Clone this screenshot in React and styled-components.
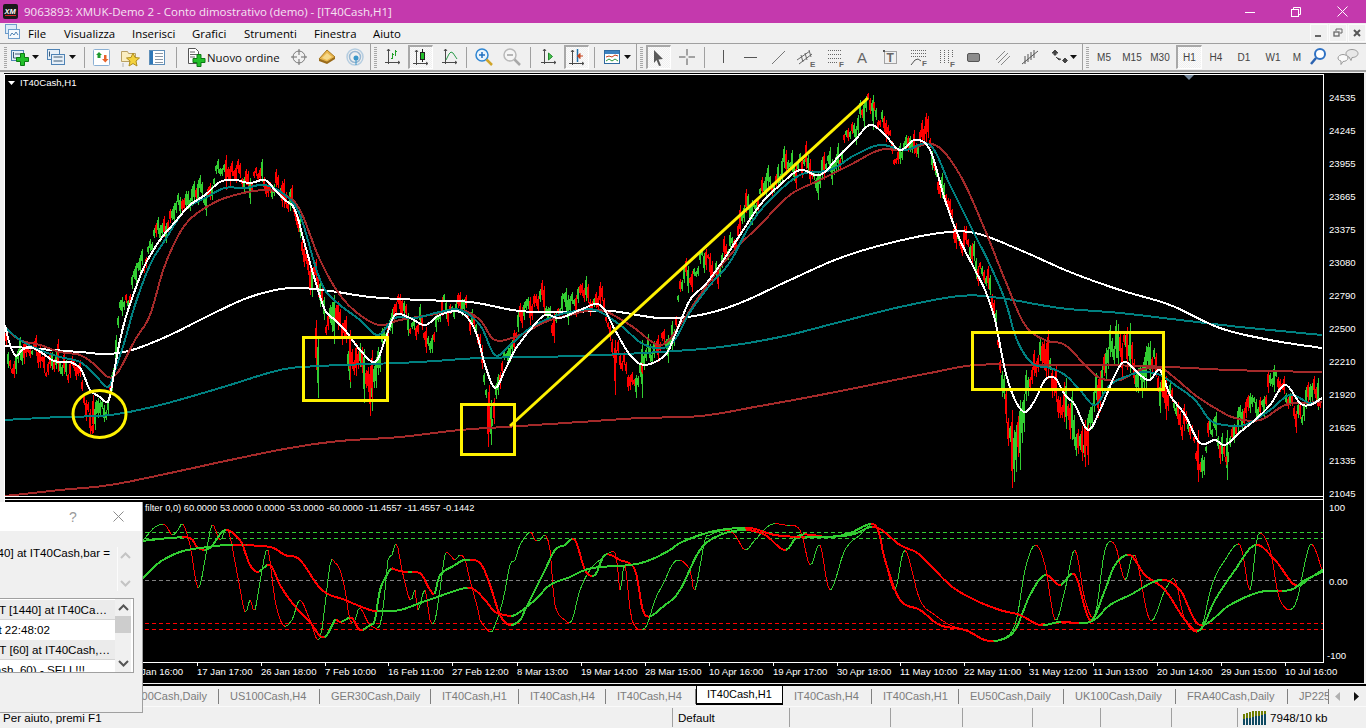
import styled, { createGlobalStyle } from 'styled-components'

const GlobalStyle = createGlobalStyle`
    html, body {
        margin: 0;
        padding: 0;
        background: #f0f0f0;
    }
`

const Page = styled.div`
    position: relative;
    display: flex;
    flex-direction: column;
    width: 1366px;
    height: 728px;
    overflow: hidden;
    background: #f0f0f0;
    font-family: 'Open Sans', 'Liberation Sans', sans-serif;
    font-size: 12px;
    color: #000;
`

const TitleBar = styled.div`
    display: flex;
    align-items: center;
    height: 23px;
    padding-left: 3px;
    padding-right: 1px;
    background: #c439ad;
    color: #f6e4f3;
`

const TitleText = styled.div`
    margin-left: 6px;
    font-size: 11.5px;
    white-space: nowrap;
`

const WindowButton = styled.div`
    display: flex;
    align-items: center;
    justify-content: center;
    width: 46px;
    height: 20px;
    margin-left: ${({ $first }) => ($first ? 'auto' : '0')};
`

const MenuBar = styled.div`
    display: flex;
    align-items: center;
    height: 20px;
    padding-left: 5px;
    border-bottom: 1px solid #a0a0a0;
`

const MenuItem = styled.div`
    width: ${({ $w }) => $w}px;
    font-size: 11.4px;
    white-space: nowrap;
`

const MdiButton = styled.div`
    display: flex;
    align-items: center;
    justify-content: center;
    box-sizing: border-box;
    width: 18px;
    height: 18px;
    margin-left: ${({ $first }) => ($first ? 'auto' : '1px')};
    border: 1px solid #fbfbfb;
`

const Toolbar = styled.div`
    display: flex;
    align-items: center;
    height: 26px;
    padding-left: 4px;
    border-bottom: 2px solid #a0a0a0;
`

const Grip = styled.div`
    flex: none;
    width: 3px;
    height: 21px;
    margin-left: ${({ $ml }) => $ml || 0}px;
    background: repeating-linear-gradient(to bottom, #a8a8a8 0 1px, #f0f0f0 1px 2px);
`

const Separator = styled.div`
    flex: none;
    width: 1px;
    height: ${({ $wide }) => ($wide ? 26 : 21)}px;
    margin-left: ${({ $ml }) => $ml || 0}px;
    background: #a0a0a0;
`

const ToolButton = styled.div`
    flex: none;
    display: flex;
    align-items: center;
    justify-content: center;
    box-sizing: border-box;
    width: ${({ $w }) => $w}px;
    height: 24px;
    margin-left: ${({ $ml }) => $ml || 0}px;
    font-family: 'Liberation Sans', sans-serif;
    font-size: 10px;
    color: #444;
    ${({ $active }) =>
        $active
            ? `
        border: 1px solid #fff;
        border-top: 2px solid #a8a8a8;
        border-left: 2px solid #a8a8a8;
        background: repeating-conic-gradient(#f0f0f0 0 25%, #fbfbfb 0 50%) 0 0 / 2px 2px;
    `
            : ''}
`

const OrderButton = styled.div`
    flex: none;
    display: flex;
    align-items: center;
    gap: 1px;
    width: 94px;
    margin-left: 9px;
    font-size: 11.4px;
    white-space: nowrap;
    color: #111;
`

const ChartArea = styled.div`
    display: flex;
    box-sizing: border-box;
    height: 612px;
    padding-left: 4px;
    padding-top: 1px;
`

const ChartSvg = styled.svg`
    display: block;
    flex: none;
    background: #000;

    text {
        font-family: 'Liberation Sans', sans-serif;
        font-size: 9.6px;
        fill: #fff;
    }
`

const IndicatorLabel = styled.text`
    && {
        font-size: 9.3px;
    }
`

const TabStrip = styled.div`
    display: flex;
    align-items: center;
    height: 20px;
    border-top: 2px solid #000;
    font-family: 'Liberation Sans', sans-serif;
    font-size: 11px;
    overflow: hidden;
`

const Tab = styled.div`
    flex: none;
    display: flex;
    align-items: center;
    justify-content: ${({ $end }) => ($end ? 'flex-end' : 'flex-start')};
    box-sizing: border-box;
    width: ${({ $w }) => $w}px;
    height: 15px;
    padding-left: ${({ $end }) => ($end ? 0 : 11)}px;
    padding-right: ${({ $end }) => ($end ? 11 : 0)}px;
    border-right: 1px solid #808080;
    overflow: hidden;
    white-space: nowrap;
    color: #7c7c7c;
`

const ActiveTab = styled.div`
    flex: none;
    display: flex;
    align-items: center;
    box-sizing: border-box;
    width: 87px;
    height: 20px;
    margin-top: -2px;
    padding-left: 10px;
    background: #fff;
    border: 1px solid #000;
    border-top: 0;
    border-bottom-width: 2px;
    color: #000;
`

const TabArrows = styled.div`
    flex: none;
    display: flex;
    align-items: center;
    gap: 14px;
    padding-left: 6px;
`

const StatusBar = styled.div`
    display: flex;
    align-items: center;
    height: 22px;
    border-top: 1px solid #fafafa;
    box-sizing: border-box;
    font-family: 'Liberation Sans', sans-serif;
    font-size: 11.6px;
`

const StatusCell = styled.div`
    flex: none;
    display: flex;
    align-items: center;
    gap: 4px;
    box-sizing: border-box;
    width: ${({ $w }) => $w}px;
    height: 19px;
    padding-left: ${({ $pl }) => $pl}px;
    border-right: ${({ $last }) => ($last ? '0' : '1px solid #a0a0a0')};
    white-space: nowrap;
`

const Dialog = styled.div`
    position: absolute;
    left: 0;
    top: 502px;
    box-sizing: border-box;
    width: 143px;
    height: 211px;
    background: #f0f0f0;
    border-right: 1px solid #a0a0a0;
    border-bottom: 1px solid #a0a0a0;
    font-family: 'Liberation Sans', sans-serif;
    font-size: 11.6px;
`

const DialogHead = styled.div`
    display: flex;
    align-items: center;
    height: 29px;
    padding-left: 69px;
    gap: 36px;
    background: #fff;
    color: #9a9a9a;
    font-size: 14px;
`

const MessageRow = styled.div`
    display: flex;
    height: 67px;
    overflow: hidden;
`

const MessageText = styled.div`
    flex: none;
    display: flex;
    justify-content: flex-end;
    width: 110px;
    padding-top: 15px;
    white-space: nowrap;
`

const MessageScroll = styled.div`
    flex: none;
    display: flex;
    flex-direction: column;
    align-items: center;
    justify-content: space-between;
    box-sizing: border-box;
    width: 15px;
    height: 44px;
    margin-top: 16px;
    margin-left: 7px;
    padding: 5px 0 4px;
    border-left: 1px solid #fbfbfb;
`

const ListBox = styled.div`
    display: flex;
    box-sizing: border-box;
    width: 134px;
    height: 75px;
    border: 1px solid #a0a0a0;
    border-left: 0;
    background: #fff;
    overflow: hidden;
`

const ListRows = styled.div`
    flex: none;
    width: 115px;
    padding-top: 1px;
`

const ListRow = styled.div`
    display: flex;
    justify-content: flex-end;
    align-items: center;
    box-sizing: border-box;
    height: 20px;
    padding-right: ${({ $pr }) => $pr}px;
    background: ${({ $grey }) => ($grey ? '#ebebeb' : '#fff')};
    border-bottom: 1px solid ${({ $grey }) => ($grey ? '#d4d4d4' : '#fff')};
    white-space: nowrap;
    overflow: hidden;
`

const ListScroll = styled.div`
    flex: none;
    display: flex;
    flex-direction: column;
    align-items: center;
    width: 16px;
    background: #f0f0f0;
`

const ScrollEnd = styled.div`
    display: flex;
    align-items: center;
    justify-content: center;
    height: 17px;
`

const ScrollThumb = styled.div`
    width: 16px;
    height: 17px;
    background: #cdcdcd;
`

const ScrollTrack = styled.div`
    flex: 1;
`

// ---- chart data, key points traced in page pixels ----

const priceKeys = [[5,330],[12,380],[22,345],[35,355],[50,365],[65,365],[80,375],[92,425],[100,405],[105,410],[115,370],[120,310],[130,290],[150,245],[165,225],[185,200],[205,195],[215,180],[228,165],[240,180],[265,180],[280,195],[292,195],[300,240],[315,280],[325,320],[335,310],[345,335],[352,365],[375,380],[385,340],[395,305],[410,320],[430,340],[445,305],[465,308],[475,320],[490,420],[505,360],[520,320],[535,295],[555,320],[575,295],[600,298],[615,350],[625,375],[640,380],[650,345],[670,345],[680,290],[700,260],[720,270],[740,225],[760,195],[780,172],[800,160],[820,178],[840,155],[860,115],[873,102],[885,130],[895,155],[915,145],[925,130],[940,185],[960,240],[980,265],[995,310],[1012,465],[1025,400],[1040,350],[1050,375],[1060,400],[1085,450],[1090,420],[1105,360],[1125,340],[1135,375],[1155,360],[1165,395],[1185,420],[1200,465],[1215,425],[1228,460],[1240,410],[1255,410],[1280,375],[1295,420],[1310,395],[1322,400]]

const spikes = [[318,338,398,1],[316,320,370,0],[372,350,400,0],[350,330,382,0],[93,395,433,0],[95,405,430,1],[488,395,447,0],[491,400,445,1],[489,385,432,0],[615,340,395,0],[642,340,398,1],[1012,410,488,0],[1014,430,482,1],[1020,400,470,1],[1085,420,467,0],[1088,425,465,0],[1127,327,370,0],[1198,430,482,0],[1227,430,480,1],[1318,378,410,1],[226,155,190,0],[873,95,130,1]]

const fastWhite = [[5,325],[10,345],[16,356],[22,350],[30,347],[42,353],[52,360],[60,362],[70,362],[80,368],[85,378],[90,390],[100,397],[108,402],[112,385],[118,350],[125,320],[135,290],[145,265],[160,240],[175,222],[190,205],[205,195],[220,182],[235,180],[250,183],[265,180],[275,190],[285,200],[295,210],[305,245],[315,280],[325,310],[335,320],[345,330],[360,350],[375,362],[385,340],[395,315],[410,318],[425,325],[440,315],[460,312],[475,330],[485,365],[495,388],[505,370],[515,350],[530,330],[545,315],[560,318],[580,310],[600,305],[615,330],[630,355],[645,365],[665,355],[675,335],[690,300],[705,285],[720,265],[740,235],[760,205],[780,185],[800,170],[820,175],[840,155],[855,140],[870,125],[885,135],[900,150],[915,140],[930,150],[945,200],[960,240],[975,270],[985,290],[995,320],[1005,370],[1015,400],[1025,412],[1035,400],[1045,380],[1055,378],[1065,395],[1075,405],[1088,430],[1100,410],[1115,375],[1125,362],[1140,375],[1150,380],[1160,370],[1170,395],[1185,415],[1200,443],[1215,440],[1225,445],[1240,432],[1255,420],[1270,405],[1285,385],[1300,403],[1310,405],[1322,398]]

const fastTeal = [[5,327],[20,340],[40,350],[60,357],[80,362],[95,375],[108,387],[115,370],[125,340],[135,305],[150,265],[165,240],[185,210],[205,198],[225,188],[245,188],[265,185],[285,195],[300,215],[315,265],[325,290],[340,305],[360,320],[378,335],[395,318],[415,318],[440,312],[460,310],[480,325],[495,355],[510,345],[530,328],[550,318],[570,312],[595,310],[620,325],[645,345],[670,345],[690,312],[710,285],[730,262],[750,225],[770,200],[800,175],[830,170],[855,155],[880,145],[905,150],[930,145],[950,185],[975,235],[990,265],[1005,300],[1015,335],[1025,355],[1035,365],[1050,368],[1065,375],[1080,390],[1095,405],[1110,385],[1130,375],[1145,372],[1160,375],[1175,385],[1195,400],[1210,420],[1225,425],[1245,425],[1270,410],[1290,395],[1310,403],[1322,398]]

const fastBrown = [[5,328],[20,340],[40,345],[60,352],[80,355],[95,365],[108,377],[118,372],[135,340],[150,315],[165,265],[185,225],[210,205],[235,195],[265,190],[285,195],[300,210],[320,260],[340,295],[360,315],[380,325],[400,320],[430,315],[460,310],[480,320],[495,340],[520,335],[545,322],[570,315],[600,310],[630,325],[660,345],[680,325],[700,295],[730,255],[760,225],[790,195],[820,180],[850,165],[880,150],[905,150],[935,145],[960,175],[985,230],[1005,280],[1025,325],[1045,340],[1065,345],[1085,365],[1100,378],[1120,380],[1140,370],[1160,368],[1175,378],[1195,395],[1215,408],[1235,418],[1260,420],[1285,405],[1305,403],[1322,402]]

const slowWhite = [[5,346],[40,349],[80,352],[108,354],[135,349],[170,335],[210,315],[250,297],[290,288],[330,291],[370,297],[420,300],[470,302],[520,311],[570,312],[610,311],[660,318],[700,315],[740,303],[790,280],[840,258],[890,243],[940,233],[975,233],[1020,250],[1070,272],[1120,290],[1170,305],[1220,328],[1270,340],[1322,348]]

const slowTeal = [[5,420],[60,417],[110,415],[160,405],[220,388],[280,370],[320,366],[370,364],[420,362],[480,358],[540,357],[600,355],[660,352],[720,347],[780,337],[840,322],[900,307],[960,296],[1000,298],[1060,308],[1120,313],[1180,320],[1240,327],[1322,335]]

const slowBrown = [[5,496],[60,490],[110,485],[170,473],[230,460],[290,448],[340,441],[400,437],[460,430],[520,426],[580,422],[640,418],[700,416],[760,406],[820,395],[880,383],[930,373],[975,365],[1030,365],[1100,365],[1170,367],[1230,370],[1322,372]]

const subThin = [[142,540],[145,538],[155,527],[165,525],[172,535],[178,530],[183,524],[190,545],[198,588],[205,560],[212,525],[220,540],[228,530],[238,578],[245,612],[250,600],[255,610],[262,570],[268,550],[275,600],[283,625],[292,620],[300,600],[310,620],[320,638],[330,565],[335,563],[340,570],[345,590],[350,620],[355,620],[360,608],[370,625],[380,625],[385,590],[388,560],[392,555],[395,545],[398,548],[402,570],[410,600],[415,590],[418,610],[425,590],[430,620],[435,620],[440,590],[445,555],[450,555],[455,560],[460,555],[465,560],[470,580],[478,610],[480,620],[490,632],[495,625],[503,600],[510,565],[515,560],[520,545],[530,532],[535,540],[540,540],[545,535],[550,550],[555,605],[565,620],[572,620],[580,590],[590,570],[600,560],[615,553],[620,590],[625,565],[632,620],[645,628],[655,600],[665,580],[672,565],[680,560],[690,570],[695,590],[705,540],[710,535],[725,530],[735,535],[745,550],[755,540],[770,525],[785,525],[800,530],[810,565],[820,545],[830,590],[845,550],[860,535],[875,525],[885,560],[895,590],[905,550],[920,600],[935,615],[950,625],[965,630],[985,640],[1000,640],[1015,625],[1025,570],[1035,545],[1045,565],[1055,620],[1065,590],[1075,550],[1085,600],[1095,615],[1105,550],[1115,545],[1125,580],[1135,555],[1150,620],[1165,590],[1175,580],[1185,620],[1200,630],[1212,585],[1225,560],[1240,545],[1250,590],[1258,535],[1270,550],[1280,600],[1295,605],[1310,545],[1322,570]]

const subMedium = [[142,541],[170,538],[190,538],[198,548],[210,548],[225,530],[240,540],[245,552],[250,565],[258,572],[270,565],[280,585],[290,600],[300,612],[310,622],[320,636],[327,635],[335,620],[340,622],[345,620],[352,618],[360,630],[370,625],[375,620],[380,590],[390,570],[396,570],[405,572],[415,572],[422,575],[430,590],[435,593],[440,575],[455,565],[465,560],[480,563],[490,585],[500,615],[510,625],[520,620],[525,610],[535,590],[545,570],[555,550],[565,545],[575,540],[585,570],[595,575],[605,555],[620,560],[635,570],[645,615],[665,605],[680,590],[700,550],[720,535],[745,530],[765,535],[785,550],[800,535],[830,537],[850,533],[875,525],[885,560],[900,600],[920,610],[940,625],[965,630],[985,640],[1000,640],[1015,630],[1030,595],[1045,575],[1060,585],[1075,575],[1090,620],[1105,590],[1115,565],[1130,555],[1145,575],[1165,590],[1185,620],[1200,630],[1215,600],[1235,570],[1255,545],[1275,560],[1295,585],[1310,578],[1322,570]]

const subThick = [[143,578],[160,562],[180,552],[200,548],[225,545],[240,545],[270,547],[285,555],[300,560],[322,590],[345,600],[370,610],[380,611],[400,610],[420,603],[440,596],[465,588],[475,590],[485,600],[495,612],[505,615],[515,615],[535,600],[550,585],[570,577],[585,570],[600,567],[630,565],[650,560],[670,550],[680,543],[700,535],[720,530],[750,528],[775,535],[810,537],[850,535],[875,527],[900,545],[920,555],[950,585],[975,600],[1000,610],[1020,615],[1040,625],[1060,622],[1090,622],[1110,605],[1130,595],[1160,580],[1180,590],[1200,625],[1230,605],[1260,592],[1290,590],[1305,580],[1322,572]]

const priceLabels = [[24535,97],[24245,130],[23955,163],[23665,196],[23375,229],[23080,262],[22790,295],[22500,328],[22210,361],[21920,394],[21625,427],[21335,460],[21045,493]]

const timeLabels = [['8 Jan 16:00',133],['17 Jan 17:00',197],['26 Jan 18:00',261],['7 Feb 10:00',325],['16 Feb 11:00',388],['27 Feb 12:00',452],['8 Mar 13:00',517],['19 Mar 14:00',581],['28 Mar 15:00',645],['10 Apr 16:00',709],['19 Apr 17:00',773],['30 Apr 18:00',837],['11 May 10:00',900],['22 May 11:00',964],['31 May 12:00',1029],['11 Jun 13:00',1093],['20 Jun 14:00',1157],['29 Jun 15:00',1221],['10 Jul 16:00',1285]]

function randomFrom(seed) {
    let s = seed
    return () => {
        s = (s + 0x6d2b79f5) | 0
        let t = Math.imul(s ^ (s >>> 15), 1 | s)
        t = (t + Math.imul(t ^ (t >>> 7), 61 | t)) ^ t
        return ((t ^ (t >>> 14)) >>> 0) / 4294967296
    }
}

function priceAt(x) {
    for (let i = 1; i < priceKeys.length; i++) {
        if (x <= priceKeys[i][0]) {
            const [x0, y0] = priceKeys[i - 1]
            const [x1, y1] = priceKeys[i]
            return y0 + ((y1 - y0) * (x - x0)) / (x1 - x0)
        }
    }
    return 400
}

function buildCandles() {
    const rnd = randomFrom(40)
    let up = ''
    let down = ''
    const bar = (x, top, bottom, isUp) => {
        const bodyTop = Math.round(top + (bottom - top) * 0.15)
        const bodyH = Math.max(2, Math.round((bottom - top) * 0.6))
        const d = `M${x} ${top}h1V${bottom}h-1zM${x - 1} ${bodyTop}h1v${bodyH}h-1z`
        if (isUp) up += d
        else down += d
    }
    for (let x = 6; x < 1322; x += 2) {
        const wobble = 7 * Math.sin(x * 0.31) + 5 * Math.sin(x * 0.83 + 1)
        const c = priceAt(x) + wobble
        const rising = priceAt(x + 6) < priceAt(x - 6)
        const wild = (x > 300 && x < 385) || (x > 1000 && x < 1170) ? 2 : 1
        const spread = (5 + rnd() * 11) * wild
        const top = Math.round(c - spread * rnd() - 2)
        const bottom = Math.round(c + spread * rnd() + 2)
        bar(x, top, bottom, rnd() < (rising ? 0.72 : 0.25))
    }
    spikes.forEach(([x, top, bottom, isUp]) => bar(x, top, bottom, isUp === 1))
    return { up, down }
}

const candles = buildCandles()

// catmull-rom through the traced points, sampled every two pixels or so
function smooth(pts) {
    const out = []
    for (let i = 0; i < pts.length - 1; i++) {
        const p0 = pts[Math.max(i - 1, 0)]
        const p1 = pts[i]
        const p2 = pts[i + 1]
        const p3 = pts[Math.min(i + 2, pts.length - 1)]
        const steps = Math.max(1, Math.round((p2[0] - p1[0]) / 2))
        for (let s = 0; s < steps; s++) {
            const t = s / steps
            const t2 = t * t
            const t3 = t2 * t
            const at = (k) =>
                0.5 *
                (2 * p1[k] +
                    (p2[k] - p0[k]) * t +
                    (2 * p0[k] - 5 * p1[k] + 4 * p2[k] - p3[k]) * t2 +
                    (3 * p1[k] - p0[k] - 3 * p2[k] + p3[k]) * t3)
            out.push([+at(0).toFixed(1), +at(1).toFixed(1)])
        }
    }
    out.push(pts[pts.length - 1])
    return out
}

const toPoints = (pts) => smooth(pts).map((p) => p.join(',')).join(' ')

function splitByDirection(pts) {
    let up = ''
    let down = ''
    for (let i = 1; i < pts.length; i++) {
        const d = `M${pts[i - 1][0]} ${pts[i - 1][1]}L${pts[i][0]} ${pts[i][1]}`
        if (pts[i][1] <= pts[i - 1][1]) up += d
        else down += d
    }
    return { up, down }
}

function SubLine({ pts, width }) {
    const { up, down } = splitByDirection(smooth(pts))
    return (
        <g fill="none" strokeWidth={width} strokeLinecap="round">
            <path d={up} stroke="#32cd32" />
            <path d={down} stroke="#ff0000" />
        </g>
    )
}

function Chart() {
    return (
        <ChartSvg width="1360" height="610" viewBox="4 73 1360 610">
            <g shapeRendering="crispEdges">
                <path d={candles.up} fill="#32cd32" />
                <path d={candles.down} fill="#ff0000" />
                <g fill="none" strokeWidth="2" strokeLinejoin="round">
                    <polyline points={toPoints(slowBrown)} stroke="#a52a2a" />
                    <polyline points={toPoints(slowTeal)} stroke="#008080" />
                    <polyline points={toPoints(slowWhite)} stroke="#fff" />
                    <polyline points={toPoints(fastBrown)} stroke="#a52a2a" />
                    <polyline points={toPoints(fastTeal)} stroke="#008080" />
                    <polyline points={toPoints(fastWhite)} stroke="#fff" />
                </g>
            </g>

            <g fill="none" stroke="#fff200" strokeWidth="3">
                <ellipse cx="99.5" cy="414" rx="26.5" ry="23.5" />
                <rect x="303.5" y="337.5" width="84" height="63" />
                <rect x="461.5" y="404.5" width="53" height="50" />
                <rect x="972.5" y="332.5" width="191" height="57" />
                <line x1="510" y1="426" x2="868" y2="98" />
            </g>

            <g shapeRendering="crispEdges" strokeDasharray="4 3" strokeWidth="1">
                <line x1="5" x2="1323" y1="532.5" y2="532.5" stroke="#32cd32" />
                <line x1="5" x2="1323" y1="538.5" y2="538.5" stroke="#32cd32" />
                <line x1="5" x2="1323" y1="580.5" y2="580.5" stroke="#808080" />
                <line x1="5" x2="1323" y1="623.5" y2="623.5" stroke="#ff0000" />
                <line x1="5" x2="1323" y1="629.5" y2="629.5" stroke="#ff0000" />
            </g>
            <g shapeRendering="crispEdges">
                <SubLine pts={subThin} width={1} />
                <SubLine pts={subMedium} width={2} />
                <SubLine pts={subThick} width={2} />
            </g>

            <g fill="#fff" shapeRendering="crispEdges">
                <rect x="4" y="74" width="1320" height="1" />
                <rect x="4" y="74" width="1" height="589" />
                <rect x="1323" y="74" width="1" height="589" />
                <rect x="4" y="496" width="1320" height="1" />
                <rect x="4" y="499" width="1320" height="1" />
                <rect x="4" y="662" width="1320" height="1" />
                {timeLabels.map(([label, x]) => (
                    <rect key={label} x={x} y="662" width="1" height="4" />
                ))}
            </g>

            <polygon points="1184,75 1194,75 1189,80" fill="#74879b" />
            <polygon points="8,81 15,81 11.5,85" fill="#fff" />
            <text x="20" y="86">IT40Cash,H1</text>
            <IndicatorLabel x="145" y="511">filter 0,0) 60.0000 53.0000 0.0000 -53.0000 -60.0000 -11.4557 -11.4557 -0.1442</IndicatorLabel>

            {priceLabels.map(([label, y]) => (
                <text key={label} x="1329" y={y + 3.5}>
                    {label}
                </text>
            ))}
            <text x="1329" y="510.5">100</text>
            <text x="1329" y="584.5">0.00</text>
            <text x="1327" y="658.5">-100</text>

            {timeLabels.map(([label, x]) => (
                <text key={label} x={x} y="675">
                    {label}
                </text>
            ))}
        </ChartSvg>
    )
}

// ---- icons ----

const Icon = ({ children, w = 20, h = 20 }) => (
    <svg width={w} height={h} viewBox={`0 ${-(h - 20) / 2} ${w} ${h}`} fill="none">
        {children}
    </svg>
)

const GreenPlus = ({ x = 0, y = 0 }) => (
    <path
        transform={`translate(${x} ${y})`}
        d="M4.5.5h4v4h4v4h-4v4h-4v-4h-4v-4h4z"
        fill="#22c02a"
        stroke="#0c7a14"
    />
)

const Axes = () => (
    <path d="M5.5 2v15M2 15.5h15M4 4l1.500-2 1.500 2M15 14l2 1.500-2 1.500" stroke="#4a4a4a" />
)

const NewChartIcon = () => (
    <Icon>
        <rect x="1.500" y="3.500" width="12" height="10" fill="#e6eff8" stroke="#4f83b5" />
        <path d="M3.500 5v6h7M5 7h6" stroke="#3d5a75" />
        <GreenPlus x={6} y={6} />
    </Icon>
)

const ProfilesIcon = () => (
    <Icon>
        <rect x="1.500" y="2.500" width="12" height="10" fill="#e6eff8" stroke="#4f83b5" />
        <rect x="5.500" y="7.500" width="13" height="10" fill="#e6eff8" stroke="#4f83b5" />
        <path d="M3.500 4.500v5M7.500 10h9M7.500 14h9" stroke="#3d5a75" />
    </Icon>
)

const MarketWatchIcon = () => (
    <Icon>
        <rect x="1.500" y="2.500" width="16" height="16" rx="1" fill="#fff" stroke="#8ab0d4" />
        <path d="M7 5l3 3H8.500v3h-3V8H4z" fill="#1f9a2e" />
        <path d="M12 8h2.500v4H16.500l-3.200 3.500L10 12h2z" fill="#e8632b" />
    </Icon>
)

const FavoritesIcon = () => (
    <Icon>
        <path d="M1.500 4.500h6l1 2h7v8h-14z" fill="#fbeec0" stroke="#b9a064" />
        <path d="M3 16.500v3" stroke="#777" strokeDasharray="1 1" />
        <path d="M13 6l2 4.500 4.500.5-3.500 3 1 5-4-2.500L9 19l1-5-3.500-3 4.500-.5z" fill="#f3d23e" stroke="#b08e1e" />
    </Icon>
)

const TerminalIcon = () => (
    <Icon>
        <rect x="1.500" y="3.500" width="15" height="14" fill="#fff" stroke="#5f8fb9" />
        <rect x="2" y="4" width="3" height="13" fill="#2f78b8" />
        <path d="M7 6.500h8M7 9.500h8M7 12.500h8M7 15.500h8" stroke="#8a97a5" />
    </Icon>
)

const OrderIcon = () => (
    <Icon>
        <path d="M2.500 1.500h7l3 3v12h-10z" fill="#fff" stroke="#555" />
        <path d="M4 5h5M4 7.500h7M4 10h5" stroke="#666" />
        <GreenPlus x={6.500} y={7} />
    </Icon>
)

const CrosshairCircleIcon = () => (
    <Icon>
        <circle cx="10" cy="10" r="6" stroke="#7a7a7a" />
        <path d="M10 2v6M10 12v6M2 10h6M12 10h6" stroke="#6a6a6a" />
    </Icon>
)

const GoldIcon = () => (
    <Icon>
        <path d="M2 12l8-9 8 7-8 5z" fill="#eab74e" stroke="#a87a22" />
        <path d="M2 12l8 3 8-5v2l-8 5-8-3z" fill="#9a6a18" />
        <path d="M5 11l5-5 5 4-5 3z" fill="#f6d98a" />
    </Icon>
)

const SignalIcon = () => (
    <Icon>
        <circle cx="10" cy="10" r="8" stroke="#b5cde0" strokeWidth="1.500" />
        <circle cx="10" cy="10" r="5.500" stroke="#9ab8d2" strokeWidth="1.500" />
        <circle cx="11" cy="11" r="2.500" fill="#3a96c9" />
        <path d="M11 13v5" stroke="#3a96c9" />
    </Icon>
)

const BarsIcon = () => (
    <Icon>
        <Axes />
        <path d="M9.500 6v6M8 11.500h1.500M9.500 7.500H11M12.500 3v6M12.500 4.500H14" stroke="#22a02a" />
    </Icon>
)

const CandleIcon = () => (
    <Icon>
        <Axes />
        <path d="M11.500 1v13" stroke="#222" />
        <rect x="9.500" y="4.500" width="4" height="7" fill="#22c02a" stroke="#222" />
    </Icon>
)

const LineIcon = () => (
    <Icon>
        <Axes />
        <path d="M6 13l3-6 2-2 2 1 4 6" stroke="#2a9a4a" />
    </Icon>
)

const ZoomIcon = ({ minus }) => (
    <Icon>
        <circle cx="8" cy="8" r="6" fill={minus ? '#f5f5f5' : '#eaf4fc'} stroke={minus ? '#b9b9b9' : '#2f86d2'} strokeWidth="1.500" />
        <path d={minus ? 'M5 8h6' : 'M5 8h6M8 5v6'} stroke={minus ? '#a0a0a0' : '#1f6fc0'} strokeWidth="1.500" />
        <path d="M12.500 12.500l5.500 5.500" stroke={minus ? '#a8a8a8' : '#d0a52a'} strokeWidth="2.500" />
    </Icon>
)

const ShiftIcon = () => (
    <Icon>
        <Axes />
        <path d="M9.500 6l4 3.500-4 3.500z" fill="#49c24f" stroke="#1f8a2a" />
    </Icon>
)

const AutoScrollIcon = () => (
    <Icon>
        <Axes />
        <path d="M10.500 1v13" stroke="#1f6fa8" strokeWidth="1.500" />
        <path d="M16 8h-3M13 5.500L10.500 8l2.500 2.500z" stroke="#c5401a" fill="#c5401a" />
    </Icon>
)

const TemplateIcon = () => (
    <Icon w={18}>
        <rect x="1.500" y="3.500" width="15" height="13" fill="#fff" stroke="#2f6aa0" />
        <rect x="2" y="4" width="14" height="3" fill="#3d82c0" />
        <path d="M3 10l3-1 3 1 3-2 3 1" stroke="#c8401a" />
        <path d="M3 14l3-2 3 2 3-2 3 2" stroke="#2a9a3a" />
    </Icon>
)

const CaretDown = () => (
    <svg width="7" height="4" viewBox="0 0 7 4">
        <path d="M0 0h7L3.500 4z" fill="#111" />
    </svg>
)

const CursorIcon = () => (
    <Icon>
        <path d="M5 2l9 9-4.500.5 2.500 6-2 .5-2.500-6L5 15z" fill="#5a5a5a" />
    </Icon>
)

const CrossIcon = () => (
    <Icon>
        <path d="M10 2v6.500M10 11.500V18M2 10h6.500M11.500 10H18" stroke="#555" />
    </Icon>
)

const VLineIcon = () => (
    <Icon>
        <path d="M10.500 3v13" stroke="#555" />
    </Icon>
)

const HLineIcon = () => (
    <Icon>
        <path d="M3 10.500h13" stroke="#555" />
    </Icon>
)

const TrendIcon = () => (
    <Icon>
        <path d="M3 17L16 4" stroke="#777" />
    </Icon>
)

const LetterMark = styled.text`
    font-family: 'Liberation Sans', sans-serif;
    font-weight: ${({ $thin }) => ($thin ? 400 : 700)};
    font-size: ${({ $size }) => $size}px;
    fill: #666;
`

const EquidistantIcon = () => (
    <Icon h={24}>
        <path d="M1 13L14 4M3 17L16 7M5 8l2 7M9 6l2 7M13 3l2 7" stroke="#666" />
        <LetterMark x="14" y="20" $size={8}>E</LetterMark>
    </Icon>
)

const FiboIcon = () => (
    <Icon h={24}>
        <path d="M3 3.500h13M3 7.500h13M3 11.500h13M3 15.500h10" stroke="#666" strokeDasharray="1 1" />
        <LetterMark x="14" y="20" $size={8}>F</LetterMark>
    </Icon>
)

const TextIcon = () => (
    <Icon h={24}>
        <LetterMark x="4" y="16" $size={15} $thin>A</LetterMark>
    </Icon>
)

const LabelIcon = () => (
    <Icon h={24}>
        <rect x="3.500" y="4.500" width="12" height="12" stroke="#555" strokeDasharray="1 1" />
        <rect x="2" y="3" width="2" height="2" fill="#555" />
        <LetterMark x="5.500" y="15" $size={12}>T</LetterMark>
    </Icon>
)

const FiboArcIcon = () => (
    <Icon h={24}>
        <path d="M2 3.500h15M2 6.500h15M2 9.500h15" stroke="#666" strokeDasharray="1 1" />
        <path d="M2 18l4-5 3-1 3 2" stroke="#555" />
        <LetterMark x="13" y="19" $size={8}>F</LetterMark>
    </Icon>
)

const FiboTimeIcon = () => (
    <Icon h={24}>
        <path d="M3.500 3v14M7.500 3v14M11.500 3v14M15.500 3v8" stroke="#666" strokeDasharray="1 1" />
        <LetterMark x="13" y="20" $size={8}>F</LetterMark>
    </Icon>
)

const RectIcon = () => (
    <Icon>
        <rect x="3.500" y="6.500" width="12" height="8" rx="1.500" fill="#8c8c8c" stroke="#555" />
    </Icon>
)

const ParallelIcon = () => (
    <Icon>
        <path d="M3 13L12 4M5 16L15 6M8 18l9-9" stroke="#888" />
    </Icon>
)

const PitchIcon = () => (
    <Icon>
        <path d="M2 17L18 4M5 9v8M8 7v8M11 5v8M14 3v8" stroke="#555" />
    </Icon>
)

const ArrowsIcon = () => (
    <Icon>
        <path d="M6 3l3 3H7v2H5V6H3zM16 11l2.500 2.500L16 16l-2.500-2.500zM7 10l3 3 2-1" stroke="#444" fill="#444" />
    </Icon>
)

const SearchIcon = () => (
    <Icon>
        <circle cx="12" cy="7" r="5" fill="#fff" stroke="#2f72c4" strokeWidth="2" />
        <path d="M8 11l-5 6" stroke="#2a62b0" strokeWidth="2.500" />
    </Icon>
)

const ChatIcon = () => (
    <Icon w={22}>
        <path d="M9 6.500c0-2.500 3-4 6-4s6 1.500 6 4-3 4-6 4l-1 3-2-3.500C10.500 9.500 9 8.500 9 6.500z" fill="#e8e8e8" stroke="#9a9a9a" />
        <path d="M1 11c0-2 2.500-3.500 5-3.500s5 1.500 5 3.500-2.500 3.500-5 3.500l-2 3v-3.500C2 13.500 1 12.500 1 11z" fill="#fafafa" stroke="#9a9a9a" />
    </Icon>
)

const AppLogo = () => (
    <svg width="15" height="15" viewBox="0 0 15 15">
        <rect width="15" height="15" rx="2" fill="#1a1a1a" />
        <rect x="2" y="11" width="11" height="1" fill="#d8262c" />
        <text x="1.500" y="10" fontFamily="Liberation Sans, sans-serif" fontSize="7.500" fontWeight="700" fontStyle="italic" fill="#fff">
            XM
        </text>
    </svg>
)

const MenuLogo = () => (
    <svg width="15" height="16" viewBox="0 0 15 16" fill="none">
        <rect x="0.500" y="0.500" width="11" height="9" fill="#dcebf8" stroke="#6d9ccb" />
        <rect x="3.500" y="5.500" width="11" height="9" fill="#f4f9fd" stroke="#6d9ccb" />
        <path d="M5 12l2-3 2 2 2-3 2 3" stroke="#4f83b5" />
    </svg>
)

const Minimize = () => (
    <svg width="10" height="10" viewBox="0 0 10 10">
        <path d="M0 5.500h10" stroke="#fff" />
    </svg>
)

const Restore = () => (
    <svg width="10" height="10" viewBox="0 0 10 10" fill="none">
        <path d="M2.500 2.500v-2h7v7h-2" stroke="#fff" />
        <rect x="0.500" y="2.500" width="7" height="7" stroke="#fff" />
    </svg>
)

const CloseX = ({ color = '#fff', size = 11 }) => (
    <svg width={size} height={size} viewBox="0 0 11 11">
        <path d="M.5.500l10 10M10.500.500l-10 10" stroke={color} />
    </svg>
)

const MdiMin = () => (
    <svg width="10" height="10" viewBox="0 0 10 10">
        <rect x="1" y="7" width="6" height="2" fill="#666" />
    </svg>
)

const MdiRestore = () => (
    <svg width="10" height="10" viewBox="0 0 10 10" fill="none">
        <path d="M3 3V1h6v4H7" stroke="#666" />
        <rect x="1" y="4" width="5" height="4" stroke="#666" strokeWidth="1.300" />
    </svg>
)

const MdiClose = () => (
    <svg width="10" height="10" viewBox="0 0 10 10">
        <path d="M2 2l6 6M8 2l-6 6" stroke="#555" strokeWidth="2" />
    </svg>
)

const Chevron = ({ up, color = '#c4c4c4' }) => (
    <svg width="11" height="7" viewBox="0 0 11 7" fill="none">
        <path d={up ? 'M1 6l4.500-4.500L10 6' : 'M1 1l4.500 4.500L10 1'} stroke={color} strokeWidth="2" />
    </svg>
)

const NetIcon = () => (
    <svg width="23" height="14" viewBox="0 0 23 14" shapeRendering="crispEdges">
        {Array.from({ length: 8 }, (_, i) => (
            <g key={i}>
                <rect x={i * 3} y={i < 3 ? 3 - i : 0} width="2" height={8 - (i < 3 ? 3 - i : 0) - i * 0.7} fill="#6f7f00" />
                <rect x={i * 3} y={8 - i * 0.7} width="2" height={6 + i * 0.7} fill="#0f4a62" />
            </g>
        ))}
    </svg>
)

const menus = [
    ['File', 36],
    ['Visualizza', 68],
    ['Inserisci', 60],
    ['Grafici', 52],
    ['Strumenti', 70],
    ['Finestra', 59],
    ['Aiuto', 40],
]

const tabs = [
    ['NAS100Cash,Daily', 219, true],
    ['US100Cash,H4', 101],
    ['GER30Cash,Daily', 111],
    ['IT40Cash,H1', 88],
    ['IT40Cash,H4', 87],
    ['IT40Cash,H4', 90],
    null,
    ['IT40Cash,H4', 89],
    ['IT40Cash,H1', 87],
    ['EU50Cash,Daily', 105],
    ['UK100Cash,Daily', 112],
    ['FRA40Cash,Daily', 112],
    ['JP225Cash,Daily', 41],
]

export default function App() {
    return (
        <Page>
            <GlobalStyle />
            <TitleBar>
                <AppLogo />
                <TitleText>9063893: XMUK-Demo 2 - Conto dimostrativo (demo) - [IT40Cash,H1]</TitleText>
                <WindowButton $first>
                    <Minimize />
                </WindowButton>
                <WindowButton>
                    <Restore />
                </WindowButton>
                <WindowButton>
                    <CloseX />
                </WindowButton>
            </TitleBar>

            <MenuBar>
                <MenuItem $w={23}>
                    <MenuLogo />
                </MenuItem>
                {menus.map(([label, w]) => (
                    <MenuItem key={label} $w={w}>
                        {label}
                    </MenuItem>
                ))}
                <MdiButton $first>
                    <MdiMin />
                </MdiButton>
                <MdiButton>
                    <MdiRestore />
                </MdiButton>
                <MdiButton>
                    <MdiClose />
                </MdiButton>
            </MenuBar>

            <Toolbar>
                <Grip />
                <ToolButton $w={20} $ml={3}><NewChartIcon /></ToolButton>
                <ToolButton $w={10}><CaretDown /></ToolButton>
                <ToolButton $w={20} $ml={6}><ProfilesIcon /></ToolButton>
                <ToolButton $w={12}><CaretDown /></ToolButton>
                <Separator $ml={6} />
                <ToolButton $w={20} $ml={7}><MarketWatchIcon /></ToolButton>
                <ToolButton $w={20} $ml={8}><FavoritesIcon /></ToolButton>
                <ToolButton $w={20} $ml={8}><TerminalIcon /></ToolButton>
                <Separator $ml={8} />
                <OrderButton>
                    <OrderIcon />
                    Nuovo ordine
                </OrderButton>
                <ToolButton $w={20} $ml={9}><CrosshairCircleIcon /></ToolButton>
                <ToolButton $w={20} $ml={8}><GoldIcon /></ToolButton>
                <ToolButton $w={20} $ml={8}><SignalIcon /></ToolButton>
                <Separator $ml={5} $wide />
                <Grip $ml={3} />
                <ToolButton $w={20} $ml={6}><BarsIcon /></ToolButton>
                <ToolButton $w={25} $ml={5} $active><CandleIcon /></ToolButton>
                <ToolButton $w={20} $ml={7}><LineIcon /></ToolButton>
                <Separator $ml={6} />
                <ToolButton $w={20} $ml={7}><ZoomIcon /></ToolButton>
                <ToolButton $w={20} $ml={8}><ZoomIcon minus /></ToolButton>
                <Separator $ml={8} />
                <ToolButton $w={20} $ml={8}><ShiftIcon /></ToolButton>
                <ToolButton $w={25} $ml={5} $active><AutoScrollIcon /></ToolButton>
                <Separator $ml={5} />
                <ToolButton $w={20} $ml={7}><TemplateIcon /></ToolButton>
                <ToolButton $w={10}><CaretDown /></ToolButton>
                <Separator $ml={4} $wide />
                <Grip $ml={3} />
                <ToolButton $w={25} $ml={3} $active><CursorIcon /></ToolButton>
                <ToolButton $w={20} $ml={6}><CrossIcon /></ToolButton>
                <Separator $ml={7} />
                <ToolButton $w={20} $ml={8}><VLineIcon /></ToolButton>
                <ToolButton $w={20} $ml={8}><HLineIcon /></ToolButton>
                <ToolButton $w={20} $ml={8}><TrendIcon /></ToolButton>
                <ToolButton $w={20} $ml={7}><EquidistantIcon /></ToolButton>
                <ToolButton $w={20} $ml={9}><FiboIcon /></ToolButton>
                <ToolButton $w={20} $ml={8}><TextIcon /></ToolButton>
                <ToolButton $w={20} $ml={8}><LabelIcon /></ToolButton>
                <ToolButton $w={20} $ml={8}><FiboArcIcon /></ToolButton>
                <ToolButton $w={20} $ml={8}><FiboTimeIcon /></ToolButton>
                <ToolButton $w={20} $ml={7}><RectIcon /></ToolButton>
                <ToolButton $w={20} $ml={9}><ParallelIcon /></ToolButton>
                <ToolButton $w={20} $ml={7}><PitchIcon /></ToolButton>
                <ToolButton $w={20} $ml={9}><ArrowsIcon /></ToolButton>
                <ToolButton $w={8}><CaretDown /></ToolButton>
                <Separator $ml={5} $wide />
                <Grip $ml={3} />
                <ToolButton $w={26} $ml={2}>M5</ToolButton>
                <ToolButton $w={28} $ml={1}>M15</ToolButton>
                <ToolButton $w={26} $ml={1}>M30</ToolButton>
                <ToolButton $w={26} $ml={3} $active>H1</ToolButton>
                <ToolButton $w={26} $ml={1}>H4</ToolButton>
                <ToolButton $w={26} $ml={2}>D1</ToolButton>
                <ToolButton $w={26} $ml={3}>W1</ToolButton>
                <ToolButton $w={16} $ml={3}>M</ToolButton>
                <ToolButton $w={20} $ml={3}><SearchIcon /></ToolButton>
                <ToolButton $w={34} $ml={3}><ChatIcon /></ToolButton>
            </Toolbar>

            <ChartArea>
                <Chart />
            </ChartArea>

            <TabStrip>
                {tabs.map((tab, i) =>
                    tab ? (
                        <Tab key={i} $w={tab[1]} $end={tab[2]}>
                            {tab[0]}
                        </Tab>
                    ) : (
                        <ActiveTab key={i}>IT40Cash,H1</ActiveTab>
                    ),
                )}
                <TabArrows>
                    <svg width="5" height="9" viewBox="0 0 5 9">
                        <path d="M5 0v9L0 4.500z" fill="#b0b0b0" />
                    </svg>
                    <svg width="5" height="9" viewBox="0 0 5 9">
                        <path d="M0 0v9l5-4.500z" fill="#111" />
                    </svg>
                </TabArrows>
            </TabStrip>

            <StatusBar>
                <StatusCell $w={673} $pl={3}>Per aiuto, premi F1</StatusCell>
                <StatusCell $w={117} $pl={5}>Default</StatusCell>
                <StatusCell $w={101} />
                <StatusCell $w={72} />
                <StatusCell $w={70} />
                <StatusCell $w={68} />
                <StatusCell $w={71} />
                <StatusCell $w={66} />
                <StatusCell $w={128} $pl={5} $last>
                    <NetIcon />
                    7948/10 kb
                </StatusCell>
            </StatusBar>

            <Dialog>
                <DialogHead>
                    ?
                    <CloseX color="#8c8c8c" />
                </DialogHead>
                <MessageRow>
                    <MessageText>ALERT [1440] at IT40Cash,bar =</MessageText>
                    <MessageScroll>
                        <Chevron up />
                        <Chevron />
                    </MessageScroll>
                </MessageRow>
                <ListBox>
                    <ListRows>
                        <ListRow $grey $pr={8}>ALERT [1440] at IT40Ca…</ListRow>
                        <ListRow $pr={65}>Alert at 22:48:02</ListRow>
                        <ListRow $grey $pr={5}>ALERT [60] at IT40Cash,…</ListRow>
                        <ListRow $pr={30}>(IT40Cash, 60) - SELL!!!</ListRow>
                    </ListRows>
                    <ListScroll>
                        <ScrollEnd>
                            <Chevron up color="#555" />
                        </ScrollEnd>
                        <ScrollThumb />
                        <ScrollTrack />
                        <ScrollEnd>
                            <Chevron color="#555" />
                        </ScrollEnd>
                    </ListScroll>
                </ListBox>
            </Dialog>
        </Page>
    )
}
